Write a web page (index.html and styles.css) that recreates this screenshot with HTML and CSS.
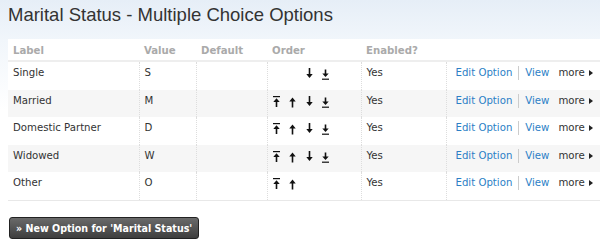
FILE: index.html
```html
<!DOCTYPE html>
<html>
<head>
  <meta charset="UTF-8">
  <title>Marital Status - Multiple Choice Options</title>
  <link rel="stylesheet" href="styles.css">
</head>
<body>
  <svg class="icon-defs" width="0" height="0">
    <symbol id="i-top" viewBox="0 0 7 12">
      <rect x="0" y="0" width="7" height="1.2"/>
      <polygon points="3.5,2.2 0.3,6 6.7,6"/>
      <rect x="2.7" y="5.5" width="1.6" height="5.5"/>
    </symbol>
    <symbol id="i-up" viewBox="0 0 7 12">
      <polygon points="3.5,1.5 0.3,5.5 6.7,5.5"/>
      <rect x="2.7" y="5" width="1.6" height="6.5"/>
    </symbol>
    <symbol id="i-down" viewBox="0 0 7 12">
      <rect x="2.7" y="0" width="1.6" height="6.5"/>
      <polygon points="0.3,6 6.7,6 3.5,10"/>
    </symbol>
    <symbol id="i-bottom" viewBox="0 0 7 12">
      <rect x="2.7" y="1.5" width="1.6" height="4.5"/>
      <polygon points="0.3,5.5 6.7,5.5 3.5,9"/>
      <rect x="0" y="10.6" width="7" height="1.2"/>
    </symbol>
  </svg>

  <h1>Marital Status - Multiple Choice Options</h1>

  <table class="options">
    <thead>
      <tr>
        <th class="col-label">Label</th>
        <th class="col-value">Value</th>
        <th class="col-default">Default</th>
        <th class="col-order">Order</th>
        <th class="col-enabled">Enabled?</th>
        <th class="col-actions"></th>
      </tr>
    </thead>
    <tbody>
      <tr>
        <td>Single</td>
        <td>S</td>
        <td></td>
        <td class="order">
          <span class="slot"></span><span class="slot"></span>
          <a class="slot" href="#"><svg><use href="#i-down"/></svg></a><a class="slot" href="#"><svg><use href="#i-bottom"/></svg></a>
        </td>
        <td>Yes</td>
        <td class="actions"><a href="#">Edit Option</a><span class="sep"></span><a href="#">View</a><span class="more">more</span></td>
      </tr>
      <tr class="even">
        <td>Married</td>
        <td>M</td>
        <td></td>
        <td class="order">
          <a class="slot" href="#"><svg><use href="#i-top"/></svg></a><a class="slot" href="#"><svg><use href="#i-up"/></svg></a><a class="slot" href="#"><svg><use href="#i-down"/></svg></a><a class="slot" href="#"><svg><use href="#i-bottom"/></svg></a>
        </td>
        <td>Yes</td>
        <td class="actions"><a href="#">Edit Option</a><span class="sep"></span><a href="#">View</a><span class="more">more</span></td>
      </tr>
      <tr>
        <td>Domestic Partner</td>
        <td>D</td>
        <td></td>
        <td class="order">
          <a class="slot" href="#"><svg><use href="#i-top"/></svg></a><a class="slot" href="#"><svg><use href="#i-up"/></svg></a><a class="slot" href="#"><svg><use href="#i-down"/></svg></a><a class="slot" href="#"><svg><use href="#i-bottom"/></svg></a>
        </td>
        <td>Yes</td>
        <td class="actions"><a href="#">Edit Option</a><span class="sep"></span><a href="#">View</a><span class="more">more</span></td>
      </tr>
      <tr class="even">
        <td>Widowed</td>
        <td>W</td>
        <td></td>
        <td class="order">
          <a class="slot" href="#"><svg><use href="#i-top"/></svg></a><a class="slot" href="#"><svg><use href="#i-up"/></svg></a><a class="slot" href="#"><svg><use href="#i-down"/></svg></a><a class="slot" href="#"><svg><use href="#i-bottom"/></svg></a>
        </td>
        <td>Yes</td>
        <td class="actions"><a href="#">Edit Option</a><span class="sep"></span><a href="#">View</a><span class="more">more</span></td>
      </tr>
      <tr>
        <td>Other</td>
        <td>O</td>
        <td></td>
        <td class="order">
          <a class="slot" href="#"><svg><use href="#i-top"/></svg></a><a class="slot" href="#"><svg><use href="#i-up"/></svg></a>
        </td>
        <td>Yes</td>
        <td class="actions"><a href="#">Edit Option</a><span class="sep"></span><a href="#">View</a><span class="more">more</span></td>
      </tr>
    </tbody>
  </table>

  <div class="buttons">
    <button type="button" class="new-option">&raquo; New Option for 'Marital Status'</button>
  </div>
</body>
</html>
```

FILE: styles.css
```css
html {
  overflow: hidden;
}
body {
  margin: 0;
  padding: 0 0 0 8px;
  font-family: "DejaVu Sans Condensed", "DejaVu Sans", Verdana, sans-serif;
  font-size: 11.3px;
  color: #333;
  background: linear-gradient(to bottom, #e6eef7 0, #f1f6fb 40px, #ffffff 110px);
  background-repeat: no-repeat;
  min-height: 245px;
}
.icon-defs {
  position: absolute;
  width: 0;
  height: 0;
}
h1 {
  margin: 0;
  padding-top: 3.5px;
  height: 39px;
  box-sizing: border-box;
  font-family: "Liberation Sans", Arial, sans-serif;
  font-weight: normal;
  font-size: 18.5px;
  line-height: 22px;
  color: #333;
}
.options {
  width: 600px;
  border-collapse: collapse;
  background-color: #fff;
  table-layout: fixed;
  border-bottom: 1px solid #e8e8e8;
}
.options th {
  text-align: left;
  font-weight: bold;
  color: #aaa;
  padding: 5px 5px 2px;
  height: 14px;
  line-height: 14px;
  border-bottom: 2px solid #eee;
}
.options td {
  padding: 4px 5px 0;
  height: 23.5px;
  line-height: 14px;
  vertical-align: top;
  border-left: 1px dotted #ddd;
}
.options td:first-child {
  border-left: none;
}
.options tr.even td {
  background-color: #f6f6f6;
}
.col-label { width: 121px; }
.col-value { width: 47px; }
.col-default { width: 61px; }
.col-order { width: 84px; }
.col-enabled { width: 75px; }
.col-actions { width: auto; }
.order {
  white-space: nowrap;
  font-size: 0;
}
.slot {
  display: inline-block;
  width: 7px;
  height: 12px;
  margin-right: 9.5px;
  vertical-align: top;
  margin-top: 2px;
}
.slot svg {
  width: 7px;
  height: 12px;
  fill: #111;
  display: block;
}
.actions {
  padding-left: 9px !important;
  white-space: nowrap;
}
.actions a {
  color: #2c7fc6;
  text-decoration: none;
}
.sep {
  display: inline-block;
  width: 1px;
  height: 14px;
  background-color: #ccc;
  margin: 0 6px;
  vertical-align: top;
}
.more {
  margin-left: 9px;
  color: #333;
}
.more::after {
  content: "";
  display: inline-block;
  margin-left: 4px;
  border-left: 4px solid #222;
  border-top: 3.5px solid transparent;
  border-bottom: 3.5px solid transparent;
  vertical-align: 0;
}
.buttons {
  padding-top: 16px;
}
.new-option {
  display: block;
  font-family: "DejaVu Sans Condensed", "DejaVu Sans", Verdana, sans-serif;
  font-size: 10.6px;
  font-weight: bold;
  color: #fff;
  height: 22px;
  padding: 0 6px;
  margin-left: 1px;
  border: 1px solid #222;
  border-radius: 3px;
  background: linear-gradient(to bottom, #6a6a6a 0, #3e3e3e 100%);
  cursor: pointer;
}
```
